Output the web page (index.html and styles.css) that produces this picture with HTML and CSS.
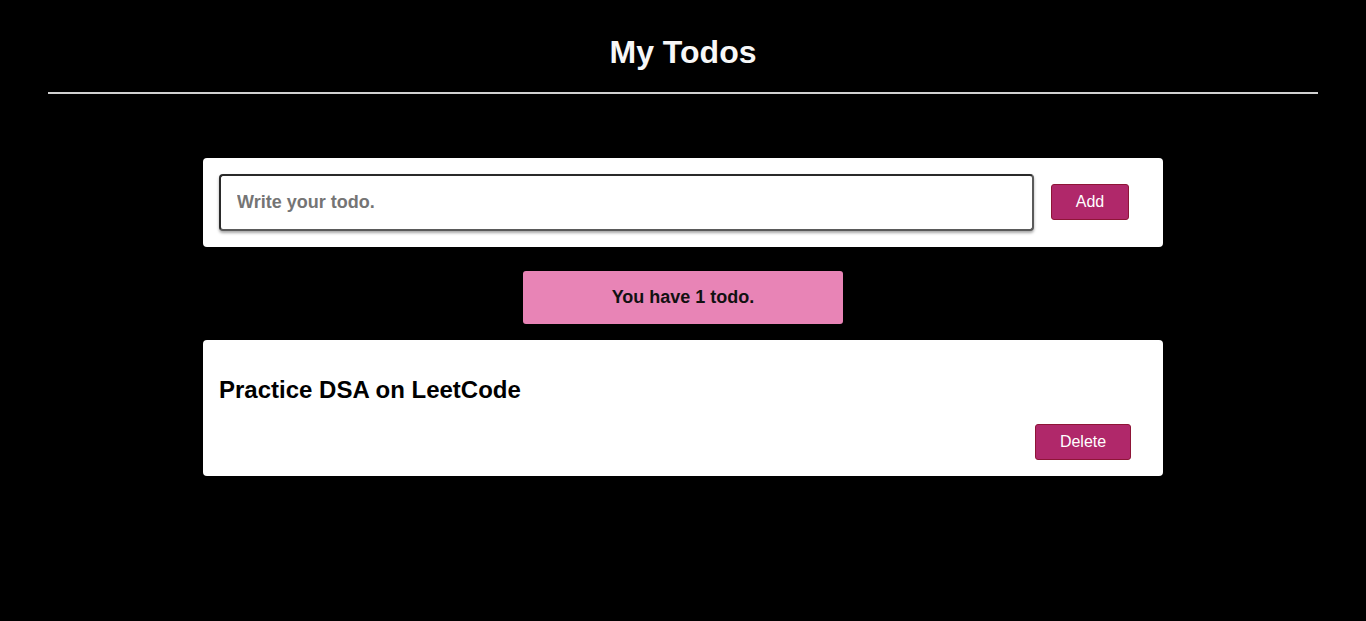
FILE: index.html
```html
<!DOCTYPE html>
<html lang="en">
<head>
<meta charset="utf-8">
<title>My Todos</title>
<link rel="stylesheet" href="styles.css">
</head>
<body>
<header class="header">
  <h1 class="title">My Todos</h1>
  <hr class="rule">
</header>
<main class="main">
  <form class="add-card">
    <input class="todo-input" type="text" placeholder="Write your todo.">
    <button class="btn" type="button">Add</button>
  </form>
  <div class="counter">You have 1 todo.</div>
  <div class="todo-card">
    <h2 class="todo-title">Practice DSA on LeetCode</h2>
    <div class="todo-actions">
      <button class="btn btn-delete" type="button">Delete</button>
    </div>
  </div>
</main>
</body>
</html>
```
FILE: styles.css
```css
* { box-sizing: border-box; }
html, body { margin: 0; padding: 0; background: #000; }
body { font-family: "Liberation Sans", Arial, sans-serif; color: #000; }

.header { padding: 13px 48px 0; }
.title {
  margin: 21.44px 0 20.44px;
  font-size: 32px;
  line-height: 37px;
  font-weight: 700;
  text-align: center;
  color: #f7f7f7;
}
.rule {
  margin: 0;
  height: 2px;
  border: none;
  background: #d0d0d0;
}

.main {
  width: 960px;
  margin: 64px auto 0;
  display: flex;
  flex-direction: column;
  align-items: center;
}

.add-card {
  width: 100%;
  background: #fff;
  border-radius: 4px;
  padding: 16px 34px 16px 16px;
  display: flex;
  align-items: center;
  gap: 17px;
  margin: 0;
}
.todo-input {
  flex: 1;
  height: 57px;
  border: 2px solid #2a2a2a;
  border-bottom-color: #5a5a5a;
  border-right-color: #5a5a5a;
  border-radius: 4px;
  box-shadow: 0 2px 3px rgba(0,0,0,0.35);
  padding: 0 16px;
  font-family: "Liberation Sans", Arial, sans-serif;
  font-size: 18px;
  font-weight: 700;
  color: #333;
  outline: none;
}
.todo-input::placeholder { color: #757575; font-weight: 700; }

.btn {
  width: 78px;
  height: 36px;
  background: #b0286a;
  border: 1px solid #8e1537;
  border-radius: 3px;
  color: #fff;
  font-family: "Liberation Sans", Arial, sans-serif;
  font-size: 16px;
  padding: 0;
  cursor: pointer;
}
.btn-delete { width: 96px; }

.counter {
  margin-top: 24px;
  width: 320px;
  height: 53px;
  background: #e884b6;
  border-radius: 3px;
  display: flex;
  align-items: center;
  justify-content: center;
  font-size: 18px;
  font-weight: 700;
  color: #111;
}

.todo-card {
  margin-top: 16px;
  width: 100%;
  background: #fff;
  border-radius: 4px;
  padding: 16px 32px 16px 16px;
}
.todo-title {
  margin: 20px 0;
  font-size: 24px;
  line-height: 28px;
  font-weight: 700;
  color: #000;
}
.todo-actions {
  display: flex;
  justify-content: flex-end;
}
```
